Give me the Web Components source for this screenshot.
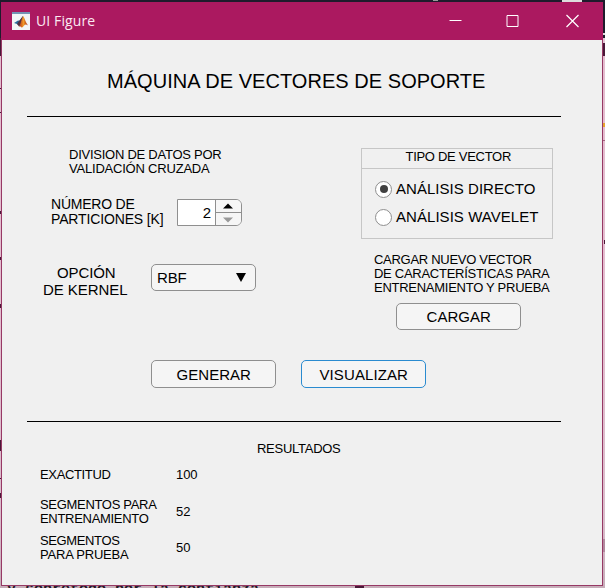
<!DOCTYPE html>
<html lang="es"><head><meta charset="utf-8"><title>UI Figure</title>
<style>html,body{margin:0;padding:0}body{width:605px;height:588px;overflow:hidden;font-family:"Liberation Sans",Arial,sans-serif;color:#000}</style>
</head><body>
<desk-top>
<figure-window caption="UI Figure">
<svm-app></svm-app>
</figure-window>
</desk-top>
<script>
const define=(name,html,init)=>customElements.define(name,class extends HTMLElement{
  connectedCallback(){
    if(this.shadowRoot)return;
    this.attachShadow({mode:'open'}).innerHTML=html;
    if(init)init.call(this,this.shadowRoot);
  }
});

/* One line of text whose tracking is adjusted to fill the width given in "w". */
define('text-line',`<style>:host{display:block;white-space:pre;font-size:var(--size,13px);line-height:var(--pitch,14px);height:var(--pitch,14px)}span{display:inline-block}</style><span><slot></slot></span>`,function(root){
  const w=parseFloat(this.getAttribute('w'));
  const span=root.querySelector('span');
  this.style.width=w+'px';
  const n=this.textContent.length;
  const natural=span.getBoundingClientRect().width;
  if(natural)span.style.letterSpacing=((w+.5-natural)/n)+'px';
});

define('desk-top',`<style>
:host{display:block;position:relative;box-sizing:border-box;width:605px;height:588px;padding:2px 3px 2px 1px;overflow:hidden;background:linear-gradient(#1f1b2c 0 38px,#4a1838 38px 56px,#e3bdcf 56px 300px,#d9bccb 520px,#c6adb9)}
.mark{position:absolute;background:#4a1838}
.under{position:absolute;left:7px;top:582px;font:bold 15px/15px "Liberation Mono",monospace;color:#241827;white-space:pre}
slot{position:relative;display:block;z-index:1}
</style>
<div class="under">y sobretodo por la confianza</div>
<div class="mark" style="left:355px;top:586px;width:9px;height:2px"></div>
<div class="mark" style="left:562px;top:0;width:20px;height:2px;background:#ddd"></div>
<div class="mark" style="left:433px;top:0;width:5px;height:1px;background:#999"></div>
<div class="mark" style="left:603px;top:33px;width:2px;height:2px;background:#ddd"></div>
<div class="mark" style="left:603px;top:38px;width:2px;height:5px;background:#e6c7d6"></div>
<div class="mark" style="left:603px;top:123px;width:2px;height:4px;background:#e8a32c"></div>
<div class="mark" style="left:603px;top:140px;width:2px;height:1px;background:#a4627f"></div>
<div class="mark" style="left:604px;top:240px;width:1px;height:4px"></div>
<div class="mark" style="left:603px;top:539px;width:2px;height:13px;background:#b28a9f"></div>
<div class="mark" style="left:0;top:88px;width:1px;height:1px"></div>
<div class="mark" style="left:0;top:112px;width:1px;height:1px"></div>
<div class="mark" style="left:0;top:211px;width:1px;height:3px"></div>
<div class="mark" style="left:0;top:257px;width:1px;height:3px"></div>
<div class="mark" style="left:0;top:304px;width:1px;height:4px"></div>
<div class="mark" style="left:0;top:440px;width:1px;height:11px"></div>
<div class="mark" style="left:0;top:478px;width:1px;height:1px"></div>
<div class="mark" style="left:0;top:493px;width:1px;height:5px"></div>
<slot></slot>`);

define('figure-window',`<style>
:host{display:flex;flex-direction:column;box-sizing:border-box;width:602px;height:584px;border:1px solid #973965;border-top:0;background:#f0f0f0}
header{display:flex;align-items:center;height:38px;flex:none;margin:0 -1px;padding-left:11px;background:#ab1960;color:#fff;box-sizing:border-box}
.cap{flex:1;margin-left:6px;font:14px/20px "Open Sans","Noto Sans",sans-serif;letter-spacing:.1px;color:#fbe9f2}
.tools{display:flex;padding-right:2px}.tools svg{width:58.5px;height:20px}
</style><header>
<svg width="18" height="18" viewBox="0 0 18 18"><defs><linearGradient id="g" x1="0" x2="1"><stop stop-color="#b52f16"/><stop offset=".5" stop-color="#f09a2b"/><stop offset="1" stop-color="#a62412"/></linearGradient></defs><path fill="#f3f5f7" d="M0 0h18v18H0z"/><path fill="#7394b4" d="M0 0h18v2H0z"/><path fill="#2d6c9d" d="M2 11 6 8.4l1.7.3L11 4 9.8 9.5 7 13.4 5 12z"/><path fill="#503143" d="m7 9 4-5-.6 7L7 14.5 5 12z"/><path fill="url(#g)" d="M7 14.5C9 12 9.7 6 11.2 4c1.3 1.8 2.4 6.2 4.8 9.6-1.6-1.7-2.9-1.5-4.3.3-.9 1-1.6 1.7-2.1 1.7-.5-1.1-1.4-1.4-2.6-1.1z"/></svg>
<span class="cap"></span>
<div class="tools">
<svg viewBox="0 0 58.5 20" fill="none" stroke="#fff"><path d="M23.5 9.5h12"/></svg>
<svg viewBox="0 0 58.5 20" fill="none" stroke="#fff"><path d="M23 4.5h11v11H23z"/></svg>
<svg viewBox="0 0 58.5 20" fill="none" stroke="#fff" stroke-width="1.2"><path d="m23.5 4 12 12m0-12-12 12"/></svg>
</div></header><slot></slot>`,function(root){root.querySelector('.cap').textContent=this.getAttribute('caption')});

define('rule-line',`<style>:host{display:block;width:534px;height:1px;margin-left:25px;background:#000}</style>`);

define('push-button',`<style>
:host{display:block;width:125px;height:27px;--size:15px;--pitch:17px}
button{box-sizing:border-box;display:flex;align-items:center;justify-content:center;margin:0;padding:0;font:inherit;color:inherit;width:100%;height:100%;border:1px solid #8f8f8f;border-radius:5px;background:#f5f5f5}
:host([focused]) button{border:1px solid #2a8bd0}
</style><button><slot></slot></button>`);

define('number-spinner',`<style>
:host{display:flex;box-sizing:border-box;width:65px;height:27px;border:1px solid #8f8f8f;border-radius:0 6px 6px 0;overflow:hidden;background:#fff}
.v{flex:1;text-align:right;padding-right:4px;font-size:15px;line-height:26px}
.b{width:25px;border-left:1px solid #8f8f8f;display:flex;flex-direction:column;background:#f6f6f6}
svg{width:25px;height:12px;flex:1}svg+svg{border-top:1px solid #8f8f8f}
</style><div class="v"><slot></slot></div><div class="b"><svg viewBox="0 0 25 12"><path d="M7 8.5 12 3.5l5 5z"/></svg><svg viewBox="0 0 25 12"><path fill="#999" d="M7 4.5h10l-5 5z"/></svg></div>`);

define('drop-down',`<style>
:host{display:flex;align-items:center;justify-content:space-between;box-sizing:border-box;width:105px;height:27px;padding:0 9px 0 5px;border:1px solid #8f8f8f;border-radius:5px;background:#f5f5f5;--size:15px;--pitch:17px}
</style><slot></slot><svg width="10" height="9"><path d="M0 0h10L5 9z"/></svg>`);

define('radio-item',`<style>
:host{display:flex;align-items:center;height:28px;gap:4px;--size:15px;--pitch:18px}
i{box-sizing:border-box;width:17px;height:17px;border:1px solid #8f8f8f;border-radius:50%;background:#fff;display:flex;align-items:center;justify-content:center}
:host([checked]) i::after{content:"";width:8px;height:8px;border-radius:50%;background:#404040}
</style><i></i><slot></slot>`);

define('option-panel',`<style>
:host{display:block;box-sizing:border-box;width:192px;height:91px;border:1px solid #c6c6c6}
.h{border-bottom:1px solid #c6c6c6;display:flex;justify-content:center;padding:1px 0 0 2px;height:18px}
.b{padding:6px 0 0 13px}
</style><div class="h"><slot name="title"></slot></div><div class="b"><slot></slot></div>`);

define('result-row',`<style>:host{display:flex;align-items:center;height:28px;margin-left:38px}.k{width:136px}</style><div class="k"><slot></slot></div><slot name="value"></slot>`);

define('svm-app',`<style>
:host{display:block}
.title{margin:29px 0 23px 105px;--size:20px;--pitch:24px}
.form{display:flex;height:204px}
.left{width:359px;padding-top:31px;box-sizing:border-box}
.right{padding-top:31px}
.one{margin-left:67px;height:28px}
.row{display:flex}
.two{margin:21px 0 0 49px;height:30px}
.two .t{--size:14px;--pitch:15px;width:126px}
.two number-spinner{margin-top:2px}
.three{margin:37px 0 0 41px;height:34px}
.three .t{--size:15px;--pitch:17px;width:108px}
.load{margin:14px 0 8px 13px;height:42px}
.right push-button{margin-left:35px}
.actions{display:flex;gap:25px;margin:39px 0 33px 149px}
.actions push-button{height:28px}
.res{margin:20px 0 12px 255px}
</style>
<text-line class="title" w="378">MÁQUINA DE VECTORES DE SOPORTE</text-line>
<rule-line></rule-line>
<div class="form">
 <div class="left">
  <div class="one"><text-line w="152">DIVISION DE DATOS POR</text-line><text-line w="140">VALIDACIÓN CRUZADA</text-line></div>
  <div class="row two"><div class="t"><text-line w="83">NÚMERO DE</text-line><text-line w="112">PARTICIONES [K]</text-line></div><number-spinner>2</number-spinner></div>
  <div class="row three"><div class="t"><text-line w="58" style="margin-left:14px">OPCIÓN</text-line><text-line w="84">DE KERNEL</text-line></div><drop-down><text-line w="29">RBF</text-line></drop-down></div>
 </div>
 <div class="right">
  <option-panel><text-line slot="title" w="105">TIPO DE VECTOR</text-line><radio-item checked><text-line w="139">ANÁLISIS DIRECTO</text-line></radio-item><radio-item><text-line w="142">ANÁLISIS WAVELET</text-line></radio-item></option-panel>
  <div class="load"><text-line w="157">CARGAR NUEVO VECTOR</text-line><text-line w="175">DE CARACTERÍSTICAS PARA</text-line><text-line w="175">ENTRENAMIENTO Y PRUEBA</text-line></div>
  <push-button><text-line w="64">CARGAR</text-line></push-button>
 </div>
</div>
<div class="actions"><push-button><text-line w="74">GENERAR</text-line></push-button><push-button focused><text-line w="88">VISUALIZAR</text-line></push-button></div>
<rule-line></rule-line>
<text-line class="res" w="83">RESULTADOS</text-line>
<result-row style="height:28px;margin-top:-7px"><text-line w="70">EXACTITUD</text-line><text-line slot="value" w="21">100</text-line></result-row>
<result-row style="margin-top:9px"><text-line w="116">SEGMENTOS PARA</text-line><text-line w="108">ENTRENAMIENTO</text-line><text-line slot="value" w="14">52</text-line></result-row>
<result-row style="margin-top:8px"><text-line w="79">SEGMENTOS</text-line><text-line w="88">PARA PRUEBA</text-line><text-line slot="value" w="14">50</text-line></result-row>`);
</script></body></html>
